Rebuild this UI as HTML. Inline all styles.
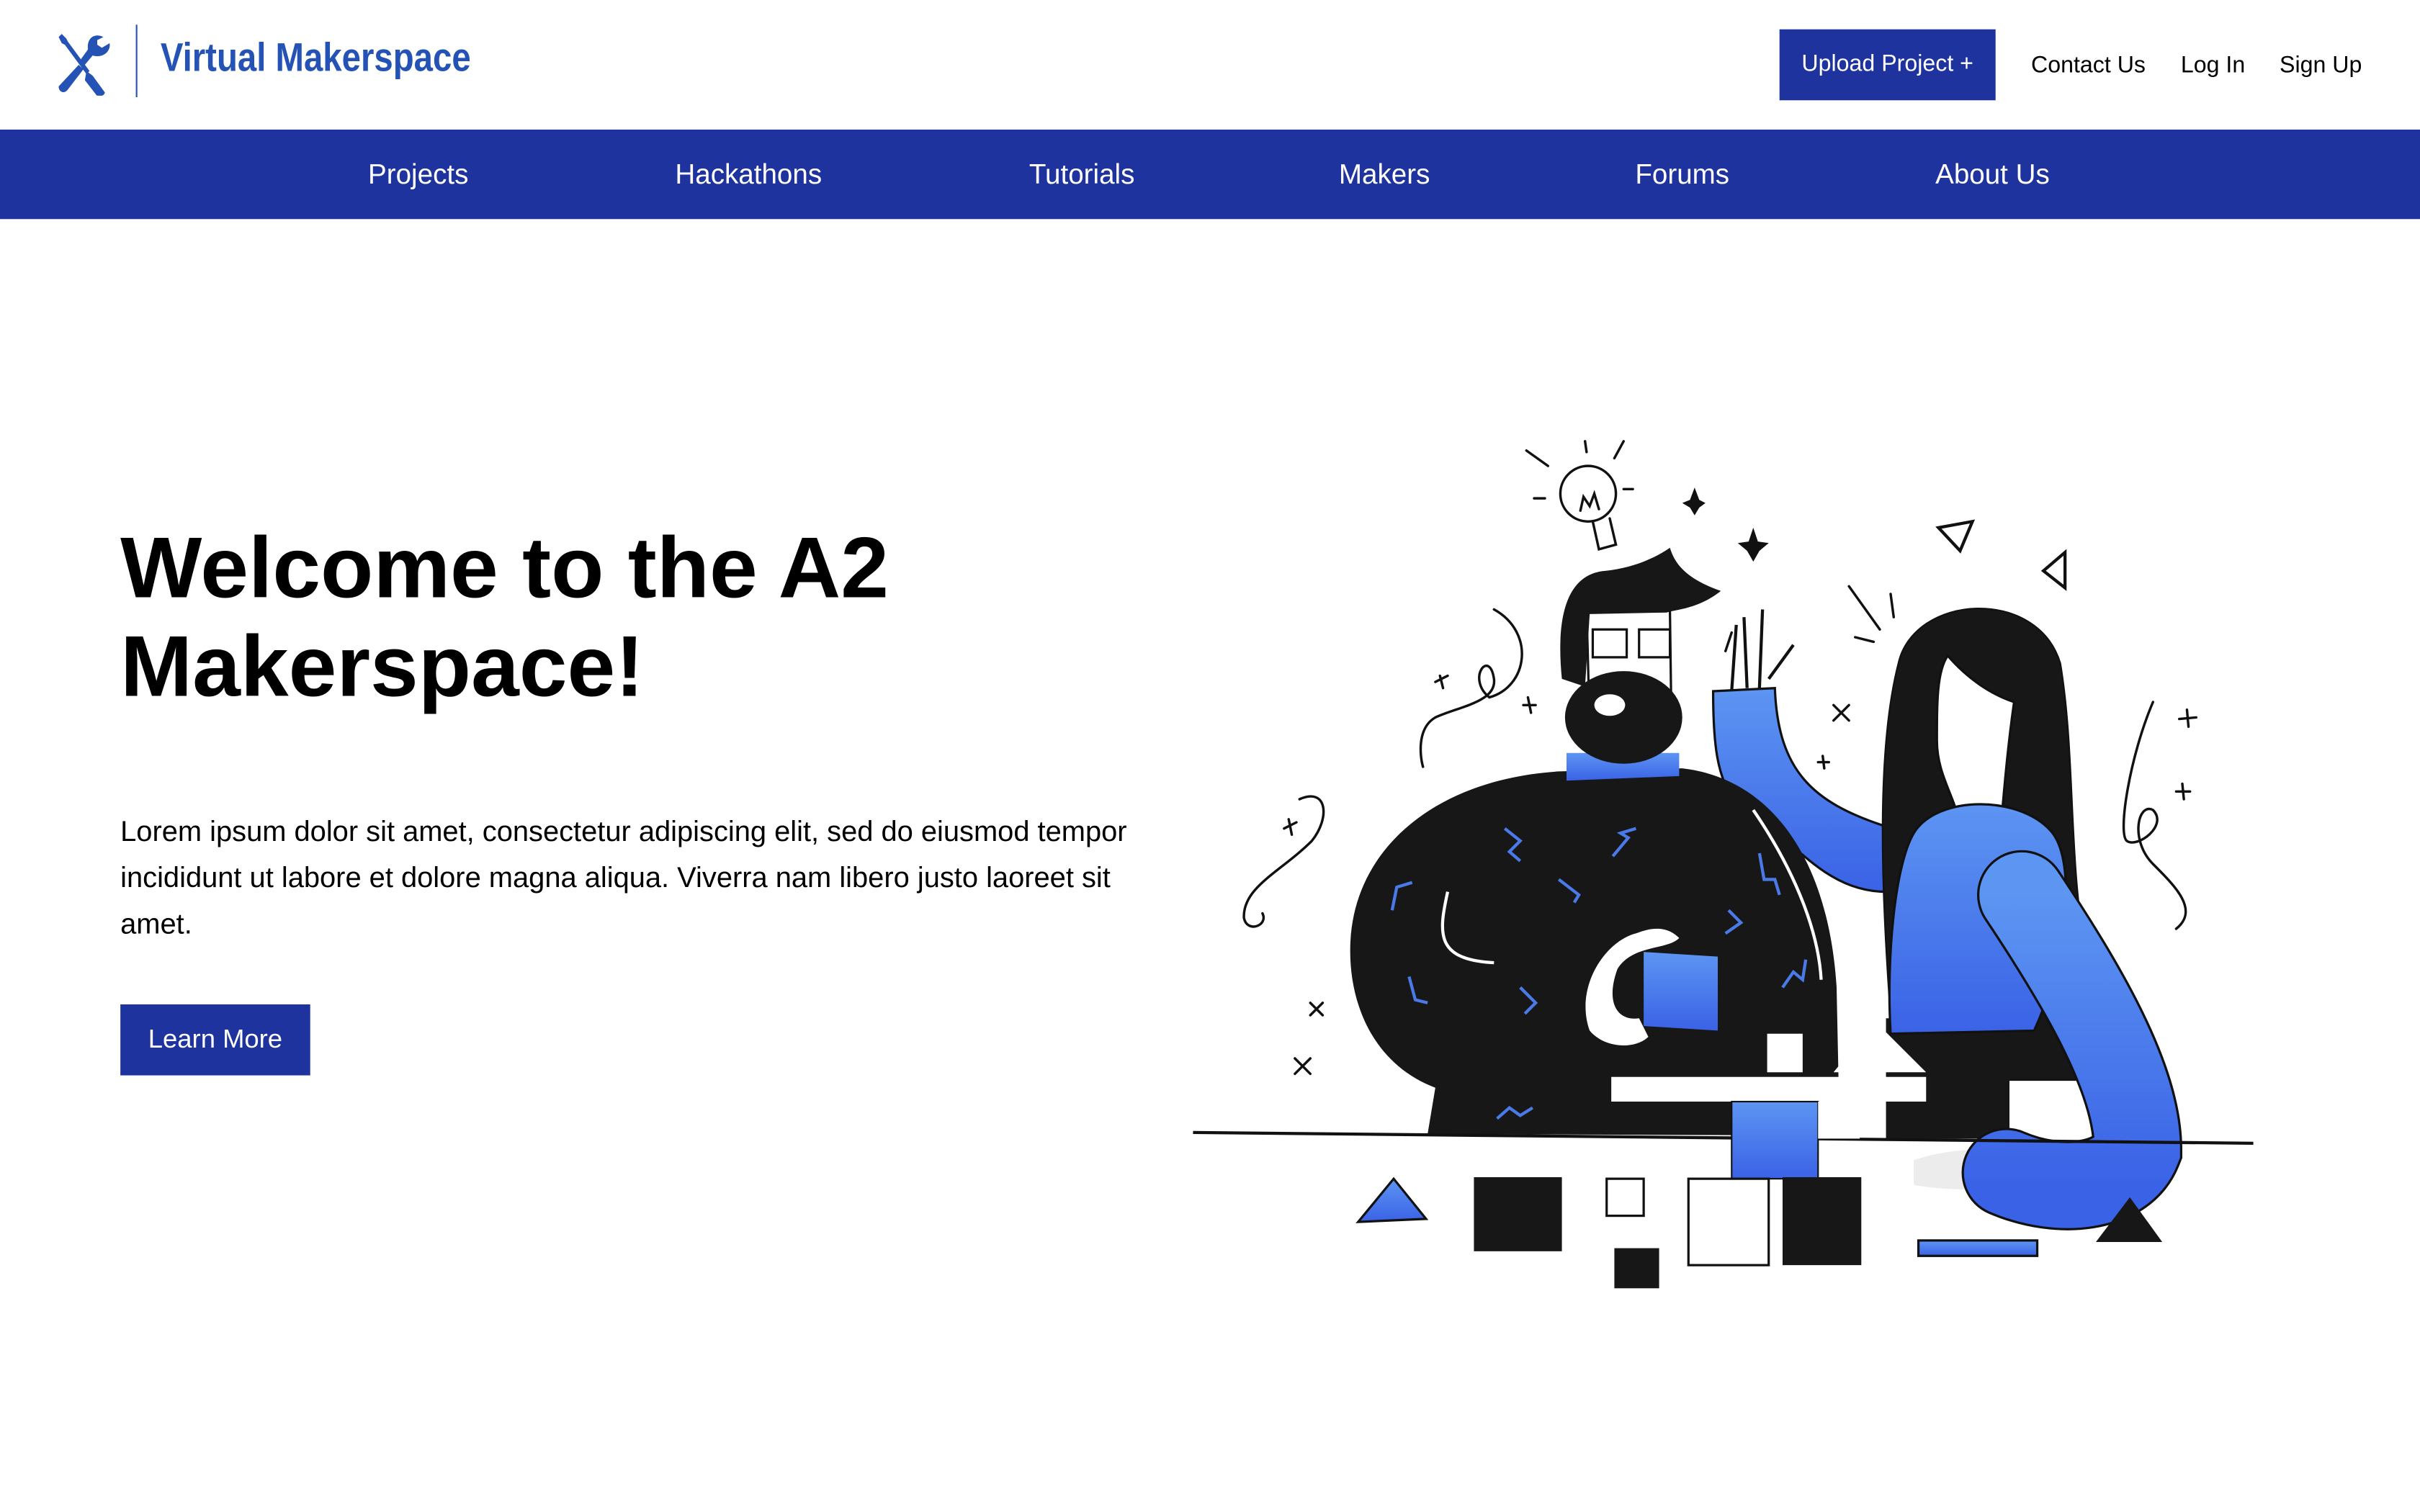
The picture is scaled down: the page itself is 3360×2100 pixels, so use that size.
<!DOCTYPE html>
<html><head><meta charset="utf-8"><style>
html,body{margin:0;padding:0;background:#fff;overflow:hidden}
body{width:3360px;height:2100px}
#w{position:absolute;left:0;top:0;width:1568px;height:980px;transform:scale(2.142857);transform-origin:0 0;font-family:"Liberation Sans",Arial,sans-serif;color:#000}
.a{position:absolute;white-space:nowrap}
.nav{position:absolute;left:0;top:84px;width:1568px;height:58px;background:#1e339d}
.nav span{position:absolute;top:0;line-height:58px;color:#fff;font-size:18px;transform:translateX(-50%)}
.btn{position:absolute;background:#1e339d;color:#fff;text-align:center}
</style></head><body><div id="w">
<svg class="a" style="left:34px;top:20px" width="42" height="42" viewBox="0 0 42 42">
<path d="M4 4 L6 2 L9 5 L10 7 L24 26 L22 28 L8 9 L6 8 Z" fill="#2553b5"/>
<path d="M22 26 L26 29 L34 40 C33 43 29 43 28 41 L21 32 Z" fill="#2553b5"/>
<path d="M33 4 C27 1 22 5 23 12 L18 19 L21 22 L26 16 C33 18 38 13 37 8 L32 11 L29 9 L29 6 Z" fill="#2553b5"/>
<path d="M17 22 L20 25 L10 38 C8 41 4 40 4 36 Z" fill="#2553b5"/>
</svg>
<div class="a" style="left:88px;top:16px;width:1px;height:47px;background:#2553b5"></div>
<div class="a" style="left:104px;top:22px;font-weight:bold;font-size:26px;color:#2553b5;transform:scaleX(0.85);transform-origin:0 0">Virtual Makerspace</div>
<div class="btn" style="left:1153px;top:19px;width:140px;height:46px;line-height:46px;font-size:15px">Upload Project +</div>
<div class="a" style="left:1316px;top:34px;font-size:15px">Contact Us</div>
<div class="a" style="left:1413px;top:34px;font-size:15px">Log In</div>
<div class="a" style="left:1477px;top:34px;font-size:15px">Sign Up</div>
<div class="nav"><span style="left:271px">Projects</span><span style="left:485px">Hackathons</span><span style="left:701px">Tutorials</span><span style="left:897px">Makers</span><span style="left:1090px">Forums</span><span style="left:1291px">About Us</span></div>
<div class="a" style="left:78px;top:336px;font-size:56px;font-weight:bold;line-height:64px">Welcome to the A2<br>Makerspace!</div>
<div class="a" style="left:78px;top:524px;font-size:18.6px;line-height:30px;white-space:normal;width:672px">Lorem ipsum dolor sit amet, consectetur adipiscing elit, sed do eiusmod tempor incididunt ut labore et dolore magna aliqua. Viverra nam libero justo laoreet sit amet.</div>
<div class="btn" style="left:78px;top:651px;width:123px;height:46px;line-height:46px;font-size:17px">Learn More</div>
<svg class="a" style="left:0;top:0" width="1568" height="980" viewBox="0 0 1568 980">
<defs><linearGradient id="g" x1="0" y1="0" x2="0" y2="1"><stop offset="0" stop-color="#5d95f2"/><stop offset="1" stop-color="#3a62e6"/></linearGradient></defs>
<g fill="none" stroke="#111" stroke-width="1.6" stroke-linecap="round">
<circle cx="1029" cy="320" r="18"/><path d="M1032 338 L1036 356 L1047 353 L1043 336 M1024 331 L1026 322 L1030 328 L1033 320 L1036 330"/>
<path d="M989 292 L1003 302 M1027 286 L1028 293 M1046 297 L1052 286 M994 323 L1001 323 M1052 317 L1058 317"/>
<path d="M1256 342 L1278 338 L1270 357 Z M1338 358 L1338 381 L1324 370 Z" stroke-width="2"/>
<path d="M968 395 C995 410 990 445 965 452 C950 440 965 420 968 440 C970 455 945 458 930 465 C918 472 920 490 922 497"/>
<path d="M842 518 C860 510 862 530 850 545 C830 565 805 575 806 595 C808 605 822 600 818 592"/>
<path d="M1395 455 C1380 490 1372 540 1378 545 C1385 550 1405 535 1395 525 C1385 520 1380 545 1395 560 C1410 575 1425 590 1410 602"/>
<path d="M1198 380 L1218 408 M1225 385 L1227 400 M1202 413 L1214 416 M1122 410 L1118 422"/>
<path d="M930 442 L938 438 M933 438 L935 446 M987 457 L995 457 M990 452 L992 462 M832 537 L840 533 M835 531 L837 541 M1188 457 L1198 467 M1198 457 L1188 467 M1178 494 L1185 494 M1181 490 L1182 498 M849 650 L857 658 M857 650 L849 658 M839 686 L849 696 M849 686 L839 696 M1412 466 L1423 465 M1417 460 L1418 471 M1410 513 L1419 513 M1414 508 L1415 518"/>
</g>
<path d="M1098 316 L1101 324 L1105 326 L1101 329 L1098 334 L1095 329 L1090 326 L1095 324 Z M1136 342 L1139 351 L1146 352 L1140 357 L1136 364 L1132 357 L1126 352 L1133 351 Z" fill="#111"/>
<path d="M1110 448 L1150 446 C1152 500 1175 520 1220 535 L1222 578 C1180 578 1160 540 1125 520 C1112 505 1110 480 1110 448 Z" fill="url(#g)" stroke="#111" stroke-width="1.5"/>
<path d="M1122 448 L1125 405 M1132 446 L1130 400 M1140 446 L1142 395 M1146 440 L1162 418" stroke="#111" stroke-width="2" fill="none"/>
<path d="M1230 430 C1240 385 1320 380 1335 430 C1345 490 1340 560 1352 620 L1358 700 L1228 700 C1222 620 1212 500 1230 430 Z" fill="#171717" stroke="#111"/>
<rect x="1222" y="660" width="80" height="78" fill="#171717"/>
<path d="M1262 425 C1275 440 1290 450 1305 455 C1300 490 1298 520 1296 540 L1270 540 C1270 520 1255 505 1255 480 C1255 455 1255 435 1262 425 Z" fill="#fff" stroke="#111" stroke-width="1.5"/>
<path d="M1240 540 C1255 515 1310 515 1330 540 C1345 560 1340 620 1318 668 L1225 670 C1222 620 1228 560 1240 540 Z" fill="url(#g)" stroke="#111" stroke-width="1.5"/>
<path d="M1240 752 C1260 745 1280 745 1290 745 L1292 770 C1270 772 1250 770 1240 768 Z" fill="#ececec"/>
<path d="M1310 580 C1350 640 1385 700 1385 745 C1375 770 1335 775 1300 760" fill="none" stroke="#111" stroke-width="58" stroke-linecap="round"/>
<path d="M1310 580 C1350 640 1385 700 1385 745 C1375 770 1335 775 1300 760" fill="none" stroke="url(#g)" stroke-width="55" stroke-linecap="round"/>
<path d="M925 735 L930 705 C890 690 873 650 875 610 C878 550 930 505 1010 500 L1090 498 C1150 505 1185 560 1190 640 L1192 736 Z" fill="#171717"/>
<path d="M1015 488 L1088 488 L1088 503 L1015 506 Z" fill="url(#g)"/>
<path d="M1028 395 L1082 395 L1083 470 L1030 470 Z" fill="#fff" stroke="#111" stroke-width="1.5"/>
<path d="M1012 440 C1008 400 1015 372 1040 370 C1060 368 1075 360 1082 355 C1085 365 1092 375 1115 383 C1100 395 1085 395 1080 397 L1030 398 L1027 445 Z" fill="#171717"/>
<ellipse cx="1052" cy="465" rx="38" ry="30" fill="#171717"/>
<ellipse cx="1043" cy="457" rx="10" ry="7" fill="#fff"/>
<path d="M1032 408 L1054 408 L1054 426 L1032 426 Z M1062 408 L1082 408 L1082 426 L1062 426 Z" fill="none" stroke="#111" stroke-width="1.5"/>
<path d="M938 578 C932 605 930 622 968 624 M1136 525 C1160 560 1178 600 1180 635" stroke="#fff" stroke-width="2" fill="none"/>
<path d="M1060 605 C1040 610 1020 640 1030 668 C1040 680 1060 680 1068 672 L1062 660 C1048 662 1040 650 1048 628 C1058 612 1080 616 1088 608 C1080 600 1070 601 1060 605 Z" fill="#fff"/>
<path d="M1065 617 L1113 620 L1113 668 L1065 665 Z" fill="url(#g)"/>
<g stroke="#4a7ae8" stroke-width="2" fill="none"><path d="M975 537 L985 545 L978 552 L985 558 M1045 555 L1055 543 L1050 540 L1060 537 M902 590 L905 575 L915 572 M1010 570 L1023 580 L1020 585 M1140 553 L1143 570 L1150 570 L1153 580 M913 633 L917 648 L925 650 M985 640 L995 650 L988 657 M1120 590 L1128 598 L1118 605 M1155 640 L1162 630 L1168 635 L1170 622 M970 725 L978 718 L985 723 L993 718"/></g>
<path d="M773 734 L1460 741" stroke="#111" stroke-width="2"/>
<rect x="1145" y="670" width="23" height="25" fill="#fff"/>
<path d="M1188 695 L1215 662 L1248 695 Z" fill="#fff"/>
<rect x="1044" y="698" width="204" height="16" fill="#fff"/>
<rect x="1122" y="714" width="56" height="50" fill="url(#g)" stroke="#111"/>
<rect x="1178" y="714" width="27" height="24" fill="#fff"/>
<path d="M880 792 L903 764 L924 790 Z" fill="url(#g)" stroke="#111" stroke-width="1.5"/>
<rect x="955" y="763" width="57" height="48" fill="#171717"/>
<rect x="1041" y="764" width="24" height="24" fill="#fff" stroke="#111" stroke-width="1.5"/>
<rect x="1046" y="809" width="29" height="26" fill="#171717"/>
<rect x="1094" y="764" width="52" height="56" fill="#fff" stroke="#111" stroke-width="1.5"/>
<rect x="1155" y="763" width="51" height="57" fill="#171717"/>
<rect x="1243" y="804" width="77" height="10" fill="url(#g)" stroke="#111" stroke-width="1.5"/>
<path d="M1358 805 L1380 776 L1401 805 Z" fill="#171717"/>
</svg>
</div></body></html>
